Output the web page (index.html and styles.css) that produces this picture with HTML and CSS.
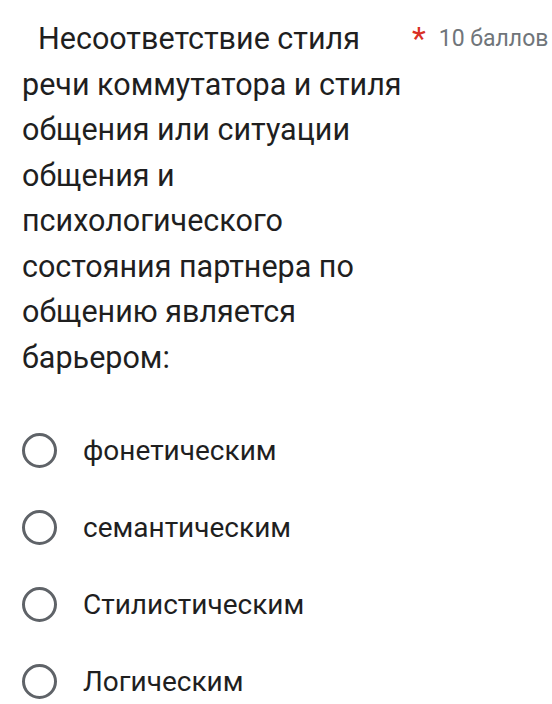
FILE: index.html
```html
<!DOCTYPE html>
<html lang="ru">
<head>
<meta charset="utf-8">
<link rel="stylesheet" href="styles.css">
</head>
<body>
<div class="question">
  <div class="header">
    <div class="title">Несоответствие стиля речи коммутатора и стиля общения или ситуации общения и психологического состояния партнера по общению является барьером:</div>
    <span class="star">*</span>
    <span class="points">10 баллов</span>
  </div>
  <div class="options">
    <div class="option"><span class="radio"></span><span class="label">фонетическим</span></div>
    <div class="option"><span class="radio"></span><span class="label">семантическим</span></div>
    <div class="option"><span class="radio"></span><span class="label">Стилистическим</span></div>
    <div class="option"><span class="radio"></span><span class="label">Логическим</span></div>
  </div>
</div>
</body>
</html>
```

FILE: styles.css
```css
html, body {
  margin: 0;
  padding: 0;
  background: #ffffff;
}
body {
  font-family: Roboto, "Noto Sans", sans-serif;
  color: #1f1f1f;
}
.question {
  padding: 16px 0 0 22px;
}
.header {
  display: flex;
  align-items: flex-start;
}
.title {
  width: 380px;
  font-size: 30.5px;
  line-height: 45.5px;
  text-indent: 16px;
}
.star {
  margin-left: 10px;
  color: #d93025;
  font-size: 32px;
  line-height: 40px;
  padding-top: 2px;
}
.points {
  margin-left: 13px;
  color: #70757a;
  font-size: 23px;
  line-height: 45px;
}
.options {
  display: flex;
  flex-direction: column;
  margin-top: 32px;
}
.option {
  display: flex;
  align-items: center;
  height: 77px;
}
.radio {
  box-sizing: border-box;
  width: 35px;
  height: 35px;
  border: 3.5px solid #5f6368;
  border-radius: 50%;
  flex: none;
}
.label {
  margin-left: 26px;
  font-size: 28px;
}
```
